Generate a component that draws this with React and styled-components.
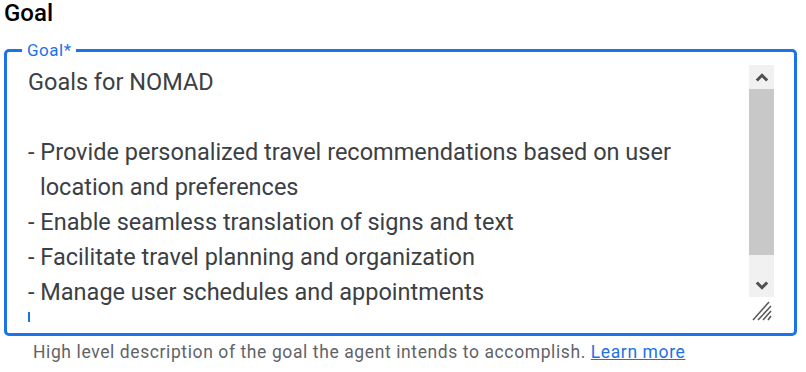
import styled, { createGlobalStyle } from "styled-components";

const GlobalStyle = createGlobalStyle`
  body {
    margin: 0;
    background: #ffffff;
    font-family: Roboto, "Liberation Sans", sans-serif;
  }
`;

const Page = styled.div`
  padding: 0 9px 0 4px;
`;

const Heading = styled.h2`
  margin: 0;
  font-size: 24px;
  line-height: 26px;
  font-weight: 500;
  color: #000000;
`;

const Outline = styled.fieldset`
  margin: 16px 0 0 0;
  padding: 6px 20px 11px 21px;
  min-width: 0;
  border: 3px solid #1a73e8;
  border-radius: 5px;
  display: flex;
  align-items: flex-start;
`;

const Label = styled.legend`
  margin-left: -6px;
  padding: 0 5px;
  font-size: 17px;
  line-height: 17px;
  letter-spacing: 0.5px;
  color: #1a73e8;
`;

const Content = styled.div`
  flex: 1;
  height: 257px;
  overflow: hidden;
  font-size: 23.5px;
  line-height: 35px;
  color: #3c4043;
`;

const Line = styled.div`
  min-height: 35px;
`;

const Bullet = styled.div`
  padding-left: 12px;
  text-indent: -12px;
`;

const Caret = styled.div`
  width: 2px;
  height: 22px;
  margin-top: 2px;
  background: #1a73e8;
`;

const ScrollColumn = styled.div`
  width: 25px;
  height: 257px;
  display: flex;
  flex-direction: column;
`;

const Track = styled.div`
  height: 232px;
  display: flex;
  flex-direction: column;
  background: #f1f1f1;
`;

const Arrow = styled.div`
  height: 24px;
  display: flex;
  align-items: center;
  justify-content: center;
  color: #505050;
`;

const Thumb = styled.div`
  height: 166px;
  background: #c8c8c8;
`;

const Gutter = styled.div`
  flex: 1;
`;

const Resizer = styled.div`
  flex: 1;
  display: flex;
  align-items: center;
  justify-content: center;
`;

const Helper = styled.p`
  margin: 5px 0 0 29px;
  font-size: 17.5px;
  line-height: 22px;
  color: #5f6368;
  letter-spacing: 0.6px;
`;

const Link = styled.a`
  color: #1a73e8;
  text-decoration: underline;
`;

function Chevron({ up }) {
  return (
    <svg width="14" height="9" viewBox="0 0 14 9">
      <path
        d={up ? "M1.8 7.5 L7 2.3 L12.2 7.5" : "M1.8 1.5 L7 6.7 L12.2 1.5"}
        fill="none"
        stroke="currentColor"
        strokeWidth="3"
      />
    </svg>
  );
}

export default function App() {
  return (
    <Page>
      <GlobalStyle />
      <Heading>Goal</Heading>
      <Outline>
        <Label>Goal*</Label>
        <Content>
          <Line>Goals for NOMAD</Line>
          <Line />
          <Bullet>
            - Provide personalized travel recommendations based on user
            <br />
            location and preferences
          </Bullet>
          <Bullet>- Enable seamless translation of signs and text</Bullet>
          <Bullet>- Facilitate travel planning and organization</Bullet>
          <Bullet>- Manage user schedules and appointments</Bullet>
          <Line>
            <Caret />
          </Line>
        </Content>
        <ScrollColumn>
          <Track>
            <Arrow>
              <Chevron up />
            </Arrow>
            <Thumb />
            <Gutter />
            <Arrow>
              <Chevron />
            </Arrow>
          </Track>
          <Resizer>
            <svg width="22" height="22" viewBox="0 0 22 22">
              <g stroke="#555" strokeWidth="1.5">
                <line x1="2" y1="21" x2="18" y2="3" />
                <line x1="7" y1="21" x2="20" y2="7" />
                <line x1="12" y1="21" x2="20" y2="12" />
                <line x1="17" y1="21" x2="20" y2="17" />
              </g>
            </svg>
          </Resizer>
        </ScrollColumn>
      </Outline>
      <Helper>
        High level description of the goal the agent intends to accomplish.{" "}
        <Link href="#">Learn more</Link>
      </Helper>
    </Page>
  );
}
